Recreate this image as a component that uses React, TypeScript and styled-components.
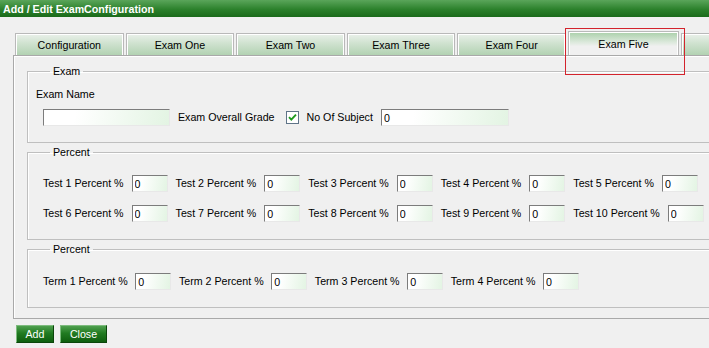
import React from "react";
import styled, { createGlobalStyle, css } from "styled-components";

const GlobalStyle = createGlobalStyle`
  html, body {
    margin: 0;
    padding: 0;
    background: #f0f0f0;
    overflow: hidden;
  }
  body {
    font-family: "Liberation Sans", Arial, sans-serif;
    font-size: 10.67px;
    color: #000;
  }
`;

const Page = styled.div`
  position: relative;
  width: 760px;
`;

const TitleBar = styled.div`
  height: 17px;
  width: 709px;
  padding-left: 3px;
  box-sizing: border-box;
  display: flex;
  align-items: center;
  color: #fff;
  font-weight: bold;
  font-size: 10.67px;
  background: linear-gradient(#5aa55a, #2c812c 55%, #1b6b1b);
`;

const Content = styled.div`
  padding: 14px 0 0 13px;
`;

const TabStrip = styled.div`
  display: flex;
  align-items: flex-end;
  gap: 2px;
  height: 24px;
  padding-left: 2px;
  overflow: hidden;
`;

const Tab = styled.div<{ selected?: boolean }>`
  flex: 0 0 auto;
  width: 108.6px;
  height: 22px;
  box-sizing: border-box;
  display: flex;
  align-items: center;
  justify-content: center;
  border: 1px solid #b9b9b9;
  border-bottom: none;
  box-shadow: inset 1px 1px 0 #fff, inset -1px 0 0 #fff;
  background: linear-gradient(#eaf0ea, #cfe2cf 45%, #b2d2b2);
  ${({ selected }) =>
    selected &&
    css`
      width: 111px;
      height: 25px;
      margin-bottom: -1px;
      position: relative;
      z-index: 1;
      padding-bottom: 1px;
      background: linear-gradient(#a9cfa9, #dfeadf 45%, #f0f0f0 60%);
    `}
`;

const Panel = styled.div`
  position: relative;
  border: 1px solid #a9a9a9;
  border-right: none;
  box-shadow: inset 1px 1px 0 #fff;
  padding: 9px 0 10px 13px;
`;

const Group = styled.fieldset<{ top?: number; bottom?: number }>`
  margin: 3px 0 0;
  &:first-child {
    margin-top: 0;
  }
  padding: ${({ top = 16 }) => top}px 0 ${({ bottom = 17 }) => bottom}px 15px;
  border: 1px solid #bfbfbf;
  border-right: none;
  box-shadow: inset 1px 1px 0 #fff;
  min-width: 0;
`;

const Legend = styled.legend`
  margin-left: 7px;
  padding: 0 3px;
  line-height: 13px;
`;

const FieldLabel = styled.div`
  line-height: 13px;
  margin-left: -7px;
  margin-bottom: 8px;
`;

const Row = styled.div<{ spaced?: boolean; tight?: boolean }>`
  display: flex;
  align-items: center;
  gap: ${({ tight }) => (tight ? "7.6px" : "8px")};
  height: 17px;
  ${({ spaced }) =>
    spaced &&
    css`
      margin-top: 13px;
    `}
`;

const Label = styled.span`
  white-space: nowrap;
  line-height: 13px;
`;

const Input = styled.input<{ w?: number }>`
  flex: 0 0 auto;
  box-sizing: border-box;
  width: ${({ w = 36 }) => w}px;
  height: 17px;
  margin: 0;
  padding: 0 2px;
  font-family: "Liberation Sans", Arial, sans-serif;
  font-size: 10.67px;
  color: #000;
  border: 1px solid;
  border-color: #7c7c7c #e8e8e8 #e8e8e8 #7c7c7c;
  background: linear-gradient(100deg, #ffffff 25%, #e3f4e3);
  outline: none;
`;

const CheckBox = styled.span`
  width: 13px;
  height: 13px;
  margin: 0 0 0 3px;
  display: inline-flex;
  svg {
    display: block;
  }
`;

const ButtonRow = styled.div`
  display: flex;
  gap: 6px;
  margin-top: 6px;
  padding-left: 3px;
`;

const Button = styled.button<{ w: number }>`
  width: ${({ w }) => w}px;
  height: 18px;
  padding: 0;
  font-family: "Liberation Sans", Arial, sans-serif;
  font-size: 10.67px;
  color: #fff;
  border: 1px solid;
  border-color: #7dbb7d #0b450b #0b450b #7dbb7d;
  background: linear-gradient(#4fa04f, #217b21 45%, #0f5e0f);
`;

const Highlight = styled.div`
  position: absolute;
  left: 565px;
  top: 28px;
  width: 120px;
  height: 47px;
  box-sizing: border-box;
  border: 1px solid #d3232c;
  pointer-events: none;
  z-index: 2;
`;

const tabs = ["Configuration", "Exam One", "Exam Two", "Exam Three", "Exam Four", "Exam Five", ""];

const Check = () => (
  <CheckBox>
    <svg width="13" height="13" viewBox="0 0 13 13">
      <rect x="0.5" y="0.5" width="12" height="12" fill="#fff" stroke="#5f7488" />
      <path d="M3 6.2 L5.3 8.6 L10 3.6" fill="none" stroke="#1e9a1e" strokeWidth="1.9" />
    </svg>
  </CheckBox>
);

const PercentRow: React.FC<{ prefix: string; nums: number[]; spaced?: boolean; tight?: boolean }> = ({
  prefix,
  nums,
  spaced,
  tight,
}) => (
  <Row spaced={spaced} tight={tight}>
    {nums.map((n) => (
      <React.Fragment key={n}>
        <Label>
          {prefix} {n} Percent %
        </Label>
        <Input defaultValue="0" />
      </React.Fragment>
    ))}
  </Row>
);

export default function App() {
  return (
    <Page>
      <GlobalStyle />
      <TitleBar>Add / Edit ExamConfiguration</TitleBar>
      <Content>
        <TabStrip>
          {tabs.map((t, i) => (
            <Tab key={i} selected={t === "Exam Five"}>
              {t}
            </Tab>
          ))}
        </TabStrip>
        <Panel>
          <Group top={10} bottom={16}>
            <Legend>Exam</Legend>
            <FieldLabel>Exam Name</FieldLabel>
            <Row>
              <Input w={127} />
              <Label>Exam Overall Grade</Label>
              <Check />
              <Label>No Of Subject</Label>
              <Input w={128} defaultValue="0" />
            </Row>
          </Group>
          <Group bottom={17}>
            <Legend>Percent</Legend>
            <PercentRow prefix="Test" nums={[1, 2, 3, 4, 5]} />
            <PercentRow prefix="Test" nums={[6, 7, 8, 9, 10]} spaced />
          </Group>
          <Group top={17}>
            <Legend>Percent</Legend>
            <PercentRow prefix="Term" nums={[1, 2, 3, 4]} tight />
          </Group>
        </Panel>
        <ButtonRow>
          <Button w={38}>Add</Button>
          <Button w={47}>Close</Button>
        </ButtonRow>
      </Content>
      <Highlight />
    </Page>
  );
}
